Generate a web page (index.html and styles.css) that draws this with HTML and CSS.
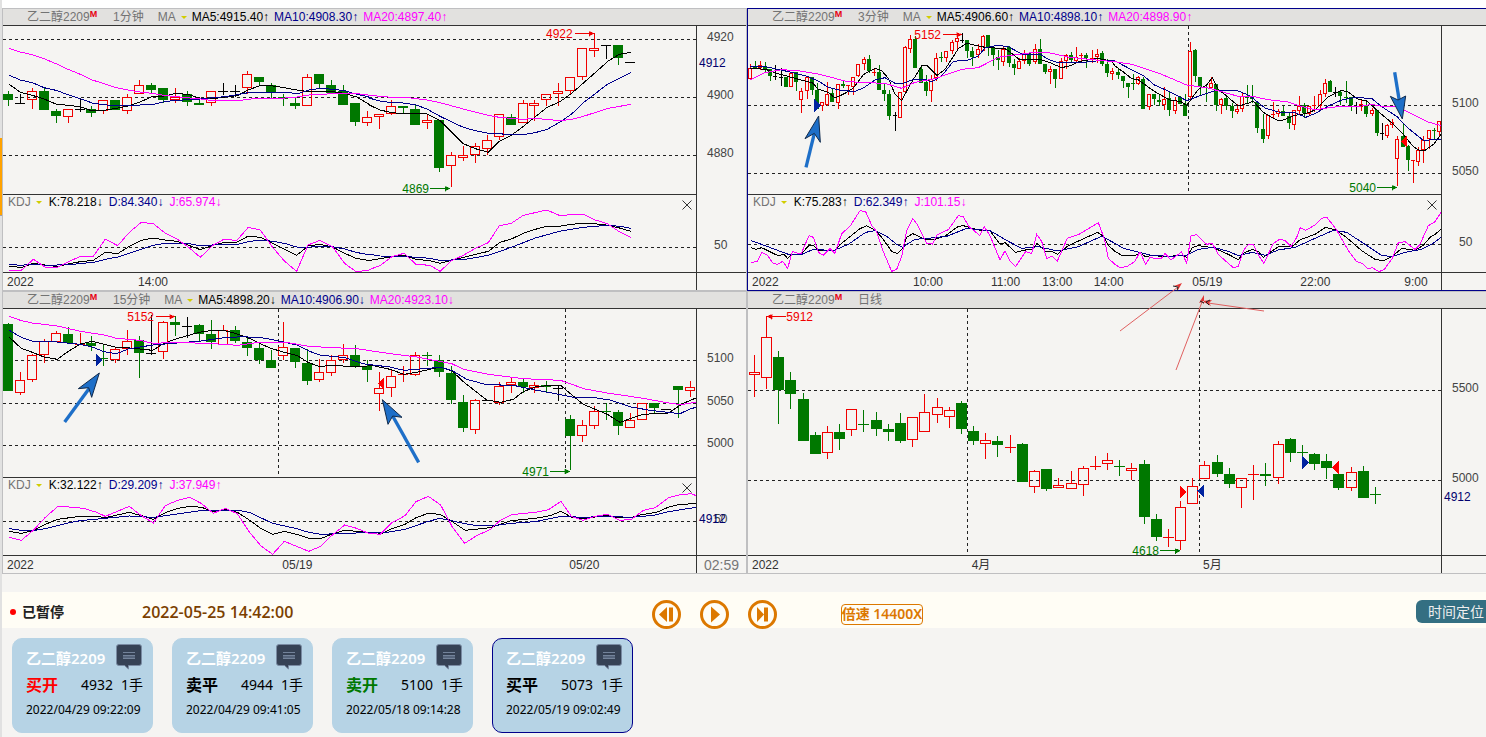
FILE: index.html
```html
<!DOCTYPE html>
<html lang="zh-CN">
<head>
<meta charset="utf-8">
<title>乙二醇2209</title>
<link rel="stylesheet" href="styles.css">
</head>
<body>
<div class="app">
  <aside class="rail"><div class="rail-mark"></div></aside>
  <div class="main">
    <main class="charts">
      <section class="panel" data-chart="m1">
        <header class="head">
          <span class="name">乙二醇2209<sup>M</sup></span><span class="period">1分钟</span>
          <button class="pick" type="button">MA<i class="caret"></i></button>
          <span class="ma5">MA5:4915.40↑</span><span class="ma10">MA10:4908.30↑</span><span class="ma20">MA20:4897.40↑</span>
        </header>
        <div class="plot">
          <svg class="price"></svg>
          <div class="sub">
            <svg class="kdj"></svg>
            <div class="legend"><button class="pick" type="button">KDJ<i class="caret"></i></button><span class="ma5">K:78.218↓</span><span class="ma10">D:84.340↓</span><span class="ma20">J:65.974↓</span></div>
            <button class="close" type="button" aria-label="关闭"><svg viewBox="0 0 10 10"><path d="M.5.5l9 9M9.5.5l-9 9"/></svg></button>
          </div>
        </div>
        <svg class="axis"></svg>
        <svg class="time"></svg>
        <div class="corner"></div>
      </section>

      <section class="panel panel-active" data-chart="m3">
        <header class="head">
          <span class="name">乙二醇2209<sup>M</sup></span><span class="period">3分钟</span>
          <button class="pick" type="button">MA<i class="caret"></i></button>
          <span class="ma5">MA5:4906.60↑</span><span class="ma10">MA10:4898.10↑</span><span class="ma20">MA20:4898.90↑</span>
        </header>
        <div class="plot">
          <svg class="price"></svg>
          <div class="sub">
            <svg class="kdj"></svg>
            <div class="legend"><button class="pick" type="button">KDJ<i class="caret"></i></button><span class="ma5">K:75.283↑</span><span class="ma10">D:62.349↑</span><span class="ma20">J:101.15↓</span></div>
            <button class="close" type="button" aria-label="关闭"><svg viewBox="0 0 10 10"><path d="M.5.5l9 9M9.5.5l-9 9"/></svg></button>
          </div>
        </div>
        <svg class="axis"></svg>
        <svg class="time"></svg>
        <div class="corner"></div>
      </section>

      <section class="panel" data-chart="m15">
        <header class="head">
          <span class="name">乙二醇2209<sup>M</sup></span><span class="period">15分钟</span>
          <button class="pick" type="button">MA<i class="caret"></i></button>
          <span class="ma5">MA5:4898.20↓</span><span class="ma10">MA10:4906.90↓</span><span class="ma20">MA20:4923.10↓</span>
        </header>
        <div class="plot">
          <svg class="price"></svg>
          <div class="sub">
            <svg class="kdj"></svg>
            <div class="legend"><button class="pick" type="button">KDJ<i class="caret"></i></button><span class="ma5">K:32.122↑</span><span class="ma10">D:29.209↑</span><span class="ma20">J:37.949↑</span></div>
            <button class="close" type="button" aria-label="关闭"><svg viewBox="0 0 10 10"><path d="M.5.5l9 9M9.5.5l-9 9"/></svg></button>
          </div>
        </div>
        <svg class="axis"></svg>
        <svg class="time"></svg>
        <div class="corner">02:59</div>
      </section>

      <section class="panel" data-chart="day">
        <header class="head">
          <span class="name">乙二醇2209<sup>M</sup></span><span class="period">日线</span>
        </header>
        <div class="plot">
          <svg class="price price-tall"></svg>
        </div>
        <svg class="axis"></svg>
        <svg class="time"></svg>
        <div class="corner"></div>
      </section>

      <svg class="notes" viewBox="0 0 150 90">
        <path d="M2 49L60 5M58 88L84 20M146 29L90 21"/>
        <path class="note-tip" d="M64 1l-8 3 4 0 0 4zM86 13l-5 8 3-1 2 2zM84 19l10-1-3 3 2 3z"/>
        <path class="note-edge" d="M55 4l5 1-1 4M92 18l-4 2 3 3M82 19l4 2"/>
      </svg>
    </main>

    <section class="bar">
      <span class="status"><i class="dot"></i>已暂停</span>
      <time class="clock">2022-05-25 14:42:00</time>
      <div class="transport">
        <button type="button" aria-label="后退"><svg viewBox="0 0 29 29"><circle cx="14.5" cy="14.5" r="13"/><path d="M7 14.5L15 7v15zM17 7.5h4v14h-4z"/></svg></button>
        <button type="button" aria-label="播放"><svg viewBox="0 0 29 29"><circle cx="14.5" cy="14.5" r="13"/><path d="M11 6.5l9 8-9 8z"/></svg></button>
        <button type="button" aria-label="前进"><svg viewBox="0 0 29 29"><circle cx="14.5" cy="14.5" r="13"/><path d="M9 7l7 7.500-7 7.500zM16 7.500h4v14h-4z"/></svg></button>
      </div>
      <button class="speed" type="button">倍速 14400X</button>
      <button class="locate" type="button">时间定位</button>
    </section>

    <section class="cards">
      <article class="card">
        <div class="card-top"><span>乙二醇2209</span><svg viewBox="0 0 26 26"><path class="bub" d="M3 .5h20a2.500 2.500 0 0 1 2.500 2.500v16a2.500 2.500 0 0 1-2.500 2.500H12.500V25L8.500 21.500H3A2.500 2.500 0 0 1 .5 19V3A2.500 2.500 0 0 1 3 .5z"/><path class="fill" d="M7 11h12v4H7z"/><path class="txt" d="M7 8.500h12M7 11.500h12M7 14.500h12"/></svg></div>
        <div class="card-mid"><b class="red">买开</b><span>4932</span><span>1手</span></div>
        <time>2022/04/29 09:22:09</time>
      </article>
      <article class="card">
        <div class="card-top"><span>乙二醇2209</span><svg viewBox="0 0 26 26"><path class="bub" d="M3 .5h20a2.500 2.500 0 0 1 2.500 2.500v16a2.500 2.500 0 0 1-2.500 2.500H12.500V25L8.500 21.500H3A2.500 2.500 0 0 1 .5 19V3A2.500 2.500 0 0 1 3 .5z"/><path class="fill" d="M7 11h12v4H7z"/><path class="txt" d="M7 8.500h12M7 11.500h12M7 14.500h12"/></svg></div>
        <div class="card-mid"><b>卖平</b><span>4944</span><span>1手</span></div>
        <time>2022/04/29 09:41:05</time>
      </article>
      <article class="card">
        <div class="card-top"><span>乙二醇2209</span><svg viewBox="0 0 26 26"><path class="bub" d="M3 .5h20a2.500 2.500 0 0 1 2.500 2.500v16a2.500 2.500 0 0 1-2.500 2.500H12.500V25L8.500 21.500H3A2.500 2.500 0 0 1 .5 19V3A2.500 2.500 0 0 1 3 .5z"/><path class="fill" d="M7 11h12v4H7z"/><path class="txt" d="M7 8.500h12M7 11.500h12M7 14.500h12"/></svg></div>
        <div class="card-mid"><b class="green">卖开</b><span>5100</span><span>1手</span></div>
        <time>2022/05/18 09:14:28</time>
      </article>
      <article class="card card-on">
        <div class="card-top"><span>乙二醇2209</span><svg viewBox="0 0 26 26"><path class="bub" d="M3 .5h20a2.500 2.500 0 0 1 2.500 2.500v16a2.500 2.500 0 0 1-2.500 2.500H12.500V25L8.500 21.500H3A2.500 2.500 0 0 1 .5 19V3A2.500 2.500 0 0 1 3 .5z"/><path class="fill" d="M7 11h12v4H7z"/><path class="txt" d="M7 8.500h12M7 11.500h12M7 14.500h12"/></svg></div>
        <div class="card-mid"><b>买平</b><span>5073</span><span>1手</span></div>
        <time>2022/05/19 09:02:49</time>
      </article>
    </section>
  </div>
</div>
<script src="charts.js"></script>
</body>
</html>
```
FILE: styles.css
```css
* { box-sizing: border-box; }
body {
  margin: 0;
  background: #f5f4f2;
  color: #000;
  font: 12px/16px "Liberation Sans", "Noto Sans CJK SC", sans-serif;
}
button { margin: 0; padding: 0; border: 0; background: none; font: inherit; color: inherit; cursor: pointer; }
svg { display: block; }
i { font-style: normal; }

.app { display: flex; min-height: 100vh; overflow: hidden; }
.rail { flex: 0 0 2px; background: #e1e1e1; padding-top: 138px; }
.rail-mark { height: 78px; background: #ffa200; border-bottom: 1px solid #a0a0a0; }
.main { flex: 1; min-width: 0; }

.charts {
  position: relative;
  display: grid;
  grid-template-columns: 745fr 739fr;
  border-top: 8px solid #fff;
}
.panel {
  display: grid;
  grid-template-columns: minmax(0, 1fr) 50px;
  border: 1px solid #bfbfc1;
}
.panel:nth-of-type(even) { grid-template-columns: minmax(0, 1fr) 45px; border-right: 0; }
.panel-active { border-color: #00008b; }

.head {
  grid-column: 1 / -1;
  display: flex;
  height: 17px;
  padding-left: 24px;
  background: #e2e1df;
  border-bottom: 1px solid #333;
  white-space: nowrap;
}
.name, .period, .pick { color: #737373; }
.name { width: 86px; }
.name sup { color: #e60012; font: bold 9px/8px "Liberation Sans", sans-serif; vertical-align: 4px; }
.period { margin-right: 14px; }
.pick { display: flex; align-items: center; gap: 5px; margin-right: 6px; line-height: 16px; }
.head .pick { margin-right: 5px; }
.caret { border: 3px solid transparent; border-top-color: #d2cd00; border-bottom: 0; }
.ma5 { color: #000; margin-right: 5px; }
.ma10 { color: #00008b; margin-right: 5px; }
.ma20 { color: #f0f; }

.plot { min-width: 0; border-bottom: 1px solid #333; }
.price, .kdj { width: 100%; overflow: visible; }
.price { height: 168px; }
.price-tall { height: 246px; }
.sub { position: relative; border-top: 1px solid #333; }
.kdj { height: 77px; }
.legend { position: absolute; top: -1px; left: 5px; display: flex; gap: 1px; }
.close { position: absolute; top: 5px; right: 4px; width: 10px; height: 10px; }
.close path { stroke: #333; fill: none; }

.axis { width: 100%; height: 247px; border-left: 1px solid #333; border-bottom: 1px solid #333; fill: #444; }
.time { width: 100%; height: 17px; fill: #333; }
.corner { border-left: 1px solid #333; padding-left: 7px; color: #777; font-size: 14px; line-height: 18px; height: 17px; }
.tag-now { fill: #00006e; }

.grid { stroke: #222; stroke-width: 3; stroke-dasharray: 9 9; }
.frame { shape-rendering: crispEdges; }
.frame path, .frame polyline { fill: none; stroke-width: 3; }
.frame .up { stroke: #f00000; }
.frame .down { stroke: #007800; fill: #007800; }
.frame .flat { stroke: #000; }
.frame .s5 { stroke: #000; }
.frame .s10 { stroke: #00008b; }
.frame .s20 { stroke: #f0f; }
.frame .solid { stroke: none; }
.frame .solid.down { fill: #007800; }
.buy { fill: #0023a0; }
.sell { fill: red; }
.hi { fill: #f00000; stroke: #f00000; }
.lo { fill: #007800; stroke: #007800; }
text.hi, text.lo { stroke: none; }
.shaft { stroke: #1e6fc8; stroke-width: 10; }
.head-tip { fill: #1e6fc8; stroke: #102a4c; stroke-width: 3; }

.notes { position: absolute; left: 75.200%; top: 274px; width: 150px; height: 90px; }
.notes path { fill: none; stroke: #e06060; }
.notes .note-tip { fill: #e23434; stroke: none; }
.notes .note-edge { stroke: #222; }

.bar {
  display: flex;
  height: 36px;
  margin-top: 18px;
  padding-left: 8px;
  background: #fffdf5;
  font: 14px/20px "Noto Sans", "Noto Sans CJK SC", sans-serif;
}
.status { display: flex; align-items: center; gap: 6px; width: 132px; height: 40px; color: #222; font-weight: 600; }
.dot { width: 6px; height: 6px; border-radius: 50%; background: red; }
.clock { flex: 0 1 510px; color: #7b3f00; font: 600 16px/40px "Open Sans", "Noto Sans", sans-serif; white-space: nowrap; }
.transport { display: flex; gap: 19px; padding-top: 8px; }
.transport svg { width: 29px; height: 29px; }
.transport circle { fill: none; stroke: #dc7800; stroke-width: 3; }
.transport path { fill: #dc7800; }
.speed {
  width: 82px;
  height: 21px;
  margin: 12px 0 0 64px;
  border: 1px solid #dc7800;
  border-radius: 4px;
  color: #dc7800;
  font-weight: 600;
  line-height: 17px;
  white-space: nowrap;
  display: flex;
  justify-content: center;
}
.locate {
  width: 70px;
  height: 23px;
  margin: 8px 0 0 auto;
  padding-left: 12px;
  border-radius: 6px 0 0 6px;
  background: #346f82;
  color: #eee;
  text-align: left;
  white-space: nowrap;
}

.cards { display: flex; flex-wrap: wrap; gap: 19px; padding: 10px; }
.card {
  width: 141px;
  padding: 5px 8px 9px 13px;
  border: 1px solid #b6d3e5;
  border-radius: 10px;
  background: #b6d3e5;
  font: 14px/20px "Noto Sans", "Noto Sans CJK SC", sans-serif;
  white-space: nowrap;
}
.card-on { border-color: #00008b; }
.card-top { display: flex; justify-content: space-between; height: 29px; color: #fff; font-weight: 600; font-size: 15px; line-height: 29px; padding-right: 2px; }
.card-top svg { width: 26px; height: 26px; }
.bub { fill: #364255; stroke: #7a8ba3; }
.fill { fill: #56657c; }
.txt { fill: none; stroke: #74849b; }
.card-mid { display: grid; grid-template-columns: 55px 40px auto; height: 24px; line-height: 24px; }
.card-mid b { font-size: 16px; }
.card time { display: block; font-size: 12px; line-height: 26px; }
.red { color: red; }
.green { color: #007800; }
```
FILE: charts.js
```js
// Plot units: three per CSS pixel. Each series is split in a left and a right half;
// the right half is stored relative to HALF.
const HALF = 1110, LEFT = 9, WIDTH = 2079;

const charts = {
  m1: {
    top: 78, height: 504, subTop: 585, start: 24.5, step: 35.92, body: [5, 10],
    grid: [118, 292, 466], subGrid: 742, breaks: [],
    candles: `g 274 283 300 317;k 283 310 310 310;r 265 274 298 326;g 264 274 332 332;g 328 334 350 368;r 328 328 350 368;k 298 327 327 333;g 319 328 341 350;r 301 301 331 341;g 301 301 332 332;r 283 292 332 341;r 240 256 280 280;g 250 256 272 277;g 265 265 300 306;r 265 292 299 308;g 274 284 308 317;g 298 309 317 317;r 274 274 307 317;k 250 274 274 283;k 255 274 274 290;r 213 223 262 280;g 231 231 248 256;g 249 256 281 291;g 283 292 298 317;g 294 310 318 326;r 222 232 316 316;g 222 222 254 265;g 240 256 279 279;g 256 274 317 317;g 309 309 368 377;r 333 352 367 377;r 343 343 349 385;r 300 319 340 343;g 319 319 326 340;g 316 328 377 377;r 344 361 367 386;g 361 361 506 515;r 457 466 496 560;r 439 466 472 482;r 430 439 464 488;r 406 421 446 464;r 343 343 409 418;g 343 352 377 377;r 301 310 367 367;r 301 310 317 360;r 283 283 298 316;r 250 274 280 317;r 232 232 271 280;r 145 145 230 239;r 100 145 151 170;k 136 136 136 176;g 136 136 176 194;k 187 187 187 187`,
    s5: ["28,253 61,277 97,286 132,297 168,312 204,316 241,320 277,333 312,331 348,325 385,318 420,306 456,290 492,288 530,280 566,284 602,295 640,296 676,291 712,287 745,270 781,256 818,258 853,263 890,270 926,275 962,275 998,275 1034,280 1070,291 1104,311", "0,316 30,330 66,338 99,341 171,342 210,362 280,431 316,446 355,457 388,424 425,405 460,379 530,323 570,305 605,280 680,214 715,183 748,163 783,157"],
    s10: ["28,226 61,240 97,248 132,263 168,271 204,284 241,296 277,309 312,314 348,318 385,316 456,314 492,305 530,301 570,299 602,297 640,293 676,290 712,284 745,278 781,276 853,276 893,281 926,270 962,265 998,268 1034,272 1070,283 1104,290", "0,295 30,303 66,308 99,309 135,314 171,327 210,349 280,382 316,392 355,400 388,401 425,405 460,404 495,398 530,389 570,366 605,342 640,308 715,251 783,217"],
    s20: ["28,145 61,156 97,164 132,176 168,191 204,208 241,223 277,240 312,251 348,263 385,270 420,276 456,280 492,286 530,290 602,297 640,302 720,301 770,295 830,296 890,291 926,285 1000,281 1070,281 1104,285", "0,286 30,289 66,292 105,292 171,300 210,308 280,327 355,346 388,352 460,358 495,355 570,362 605,358 640,349 715,325 783,313"],
    k: ["28,798 64,803 100,790 136,795 172,800 208,791 241,785 280,781 316,757 353,761 388,739 424,721 460,714 496,720 530,724 566,736 601,749 637,736 673,727 710,727 745,708 781,712 818,730 853,748 890,766 924,738 960,733 998,741 1034,760 1068,775 1104,781", "0,781 66,770 102,766 138,778 180,782 210,790 246,781 280,772 355,754 390,727 424,717 460,700 496,688 530,679 568,679 604,673 640,670 700,673 745,683 783,694"],
    d: ["28,793 64,796 100,792 136,796 208,794 280,787 316,778 353,771 388,760 424,748 460,736 496,730 566,731 601,737 637,735 712,733 745,725 781,720 818,724 853,730 890,741 924,742 960,738 998,740 1034,747 1068,757 1104,764", "0,763 30,768 100,769 180,775 210,781 280,779 355,766 424,742 496,714 568,694 640,682 712,676 750,679 783,685"],
    j: ["28,811 64,811 100,778 136,802 172,802 208,784 241,769 280,769 316,717 353,737 388,697 424,667 460,671 496,700 530,716 566,742 601,772 637,737 673,717 710,722 745,682 781,690 818,742 853,783 890,814 924,735 960,721 998,741 1034,790 1068,815 1104,811", "0,808 30,797 66,770 102,760 138,793 180,796 210,814 246,781 280,766 316,745 355,728 388,677 424,670 460,646 530,630 568,646 640,643 676,660 712,671 748,695 783,712"],
    tags: [["hi", "4922", 1638, 115, 1724, 1782, 100], ["lo", "4869", 1207, 579, 1290, 1350, 565]],
    marks: [], arrows: [],
    axis: [["4920", 123], ["4912", 201, 1], ["4900", 297], ["4880", 471], ["50", 747]],
    time: [["2022", 21], ["14:00", 414]]
  },
  m3: {
    top: 78, height: 504, subTop: 585, start: 15, step: 15.55, body: [2, 4],
    grid: [316, 520], subGrid: 733, breaks: [1330],
    candles: `r 193 205 235 235;g 183 198 208 208;r 183 195 203 208;g 187 198 208 215;g 208 208 230 240;k 195 230 230 237;k 205 233 233 255;g 231 231 261 261;r 219 219 259 259;g 216 216 248 270;r 265 274 298 338;r 231 231 271 295;g 231 231 272 283;g 250 271 329 329;r 307 307 316 332;r 248 283 314 317;g 265 281 308 308;r 253 253 308 326;g 243 252 260 262;r 256 256 260 283;r 231 231 259 283;r 193 193 227 230;r 171 178 190 208;g 165 177 215 218;r 208 218 221 227;g 195 216 270 270;g 253 270 282 300;g 270 283 350 359;k 338 346 346 390;r 277 277 352 352;r 139 142 274 277;r 105 119 146 158;g 110 118 206 206;g 202 208 249 249;g 226 247 275 287;r 226 238 270 305;r 161 176 231 240;g 157 171 174 184;r 153 153 171 185;r 121 127 152 160;r 109 116 124 150;k 101 120 120 128;g 120 120 153 173;g 141 153 171 195;r 132 147 163 172;r 105 109 150 150;g 105 105 145 165;g 143 143 165 195;g 150 172 181 207;r 138 148 185 197;g 138 142 191 200;g 178 193 206 222;r 175 184 206 206;r 151 160 180 190;g 158 160 192 195;r 132 148 184 190;g 117 148 192 192;g 192 192 216 219;r 200 208 213 249;g 207 207 237 261;r 176 184 234 234;r 163 166 181 205;g 158 166 182 188;r 141 171 181 185;r 160 165 168 187;g 159 166 174 202;r 150 174 177 186;r 147 163 170 186;g 153 160 192 195;g 178 192 221 228;r 205 215 220 238;g 205 216 227 235;g 229 229 243 263;g 250 250 261 292;g 223 250 254 267;r 229 232 249 252;g 232 237 328 328;r 283 283 320 329;g 283 283 298 313;g 287 300 308 317;r 261 298 313 328;g 277 295 332 345;r 291 301 331 340;g 289 293 313 313;g 282 314 350 350;r 126 153 290 296;g 148 150 230 243;g 231 231 261 282;g 253 261 265 305;r 231 250 262 262;g 253 253 315 332;r 295 298 313 340;g 286 295 320 328;g 310 319 333 351;r 313 327 333 339;r 276 289 325 333;g 255 290 294 306;g 255 293 297 307;g 306 306 384 396;g 342 387 419 428;r 346 346 406 415;r 308 343 346 351;r 329 334 340 350;g 319 334 350 350;g 340 350 371 384;r 331 331 373 388;r 288 318 331 340;g 311 316 341 351;r 320 320 340 346;r 288 317 320 334;r 270 283 315 330;r 237 250 280 288;g 240 243 276 276;k 261 278 278 290;g 270 278 290 314;g 243 291 294 306;g 291 293 316 330;k 307 320 320 341;r 297 314 320 332;g 308 316 342 350;r 325 331 340 346;g 331 331 399 405;k 371 400 400 419;r 373 376 406 412;r 359 368 372 383;r 409 418 475 557;g 372 410 441 441;g 437 440 482 510;r 480 480 482 546;r 442 451 484 497;r 408 421 448 488;r 390 390 415 445;g 385 390 394 418;r 364 364 393 406`,
    s5: ["15,205 62,208 94,220 110,224 140,232 186,245 202,248 220,268 250,277 270,294 300,280 325,264 355,224 390,205 410,212 430,235 450,283 470,302 495,255 530,197 545,196 576,226 600,208 640,146 665,130 720,142 780,146 800,160 822,178 850,180 886,178 910,186 950,203 980,196 1000,185 1058,175 1100,184", "0,198 24,215 50,236 69,239 87,252 118,274 148,291 166,301 196,304 215,316 250,268 274,256 292,232 310,268 336,289 370,318 398,310 415,304 445,337 475,355 492,363 505,360 540,346 570,341 601,330 640,290 680,271 700,276 725,296 755,303 800,343 832,370 865,403 895,440 915,452 930,451 957,432 978,403"],
    s10: ["15,199 62,200 94,207 140,217 186,229 220,243 250,262 290,272 330,274 355,264 390,240 420,233 450,250 470,252 500,240 540,238 560,246 590,228 625,184 670,180 700,168 720,144 755,136 790,140 830,162 886,163 910,178 940,189 1000,188 1040,185 1073,180", "0,183 40,204 87,228 118,255 148,268 181,284 215,302 258,286 300,272 370,273 398,284 415,296 450,324 490,336 540,338 572,352 601,340 640,318 680,300 720,292 771,296 800,320 846,350 880,385 925,421 978,418"],
    s20: ["15,240 60,218 110,209 160,212 220,222 300,243 340,247 420,250 470,265 510,247 570,236 620,218 652,208 700,203 760,172 800,166 860,158 915,159 970,171 1040,179", "0,185 50,193 140,223 215,255 280,264 370,289 412,289 460,299 520,306 555,318 600,329 660,321 740,318 771,313 800,319 846,320 880,336 940,366 978,377"],
    k: ["19,743 34,748 50,743 97,766 118,764 128,776 140,763 168,763 192,736 205,736 220,750 250,752 270,750 290,730 310,714 345,686 365,677 390,690 410,712 440,754 458,761 472,745 485,712 503,701 520,708 540,719 565,720 600,708 640,679 655,677 700,690 735,692 765,732 780,728 812,757 850,748 862,750 876,730 900,753 920,754 937,763 970,737 1058,697 1075,709 1090,736", "0,754 20,766 60,766 75,760 92,770 110,766 150,770 200,766 215,772 232,743 250,737 295,743 340,763 370,779 385,760 412,748 430,754 445,772 465,757 490,740 530,740 556,719 600,703 632,682 660,689 694,712 740,752 780,778 805,782 832,769 860,745 900,751 925,736 945,712 960,703 978,688"],
    d: ["19,722 60,737 130,763 168,764 205,748 265,752 310,733 362,697 390,692 425,709 455,733 472,742 510,718 550,715 605,709 665,685 735,692 790,724 830,745 880,740 937,753 1000,740 1070,709", "0,730 25,745 60,754 110,766 165,769 215,766 250,748 295,742 340,754 370,767 412,757 450,766 490,750 540,742 600,715 655,691 695,697 750,733 800,766 830,770 870,757 920,748 950,733 978,712"],
    j: ["19,788 37,784 50,757 67,765 82,788 97,793 113,784 128,805 142,755 168,762 192,707 205,712 220,757 235,766 255,745 270,760 290,701 315,679 345,632 362,635 380,676 395,695 415,755 440,814 455,808 470,770 485,692 503,655 515,671 545,730 562,732 577,704 610,689 640,647 655,650 672,680 704,706 718,681 735,707 765,780 780,752 795,783 812,799 842,755 860,761 875,703 890,724 905,776 920,768 937,783 967,715 1000,704 1060,668 1078,716 1090,775", "0,793 15,803 35,800 60,784 75,755 92,793 105,772 120,775 140,774 150,760 168,780 200,756 215,790 228,708 245,704 275,733 292,730 310,764 355,803 370,799 385,752 400,733 415,734 430,765 447,790 475,730 495,717 510,722 528,740 545,712 556,683 572,691 600,675 620,655 635,651 665,690 700,752 725,785 742,790 760,807 772,803 792,815 808,808 832,775 850,728 870,725 900,748 915,733 940,677 960,665 978,637"],
    tags: [["hi", "5152", 508, 117, 594, 650, 103], ["lo", "5040", 1813, 576, 1896, 1956, 562]],
    marks: [["buy", "208,297 208,336 227,317"], ["sell", "1968,424 1986,406 1986,442"]],
    arrows: [["183,502 208,400", "221,348 226,427 208,400 180,416"], ["1949,217 1965,315", "1972,357 1936,289 1959,300 1982,288"]],
    axis: [["5100", 321], ["5050", 525], ["50", 739]],
    time: [["2022", 21], ["10:00", 504], ["11:00", 738], ["13:00", 892], ["14:00", 1046], ["05/19", 1342], ["22:00", 1666], ["9:00", 1978]]
  },
  m15: {
    top: 72, height: 504, subTop: 579, start: 24.5, step: 35.92, body: [5, 10],
    grid: [226, 355, 481], subGrid: 709, breaks: [836, 1696],
    candles: `g 115 118 318 318;r 262 286 322 327;r 207 211 283 290;r 163 170 208 233;r 138 146 170 170;g 127 147 176 176;r 144 177 180 180;g 153 174 184 197;g 178 219 222 242;r 186 193 224 233;r 135 169 190 209;g 153 166 204 276;k 90 205 205 208;r 108 112 199 221;g 93 111 122 152;k 96 124 124 157;g 117 120 149 166;g 105 148 173 191;r 120 135 178 178;g 124 135 170 173;g 160 171 191 212;g 177 190 225 236;g 195 225 249 249;r 111 187 211 222;g 190 190 233 248;g 192 234 290 297;r 222 262 284 290;r 210 227 262 272;r 177 211 223 233;g 182 210 244 248;g 227 244 257 290;r 262 310 325 377;r 255 274 307 335;r 243 268 271 290;r 201 211 268 272;g 203 211 215 240;g 210 227 263 275;g 243 264 347 354;g 331 351 431 440;r 342 346 433 446;k 346 346 346 346;r 291 304 353 358;r 279 292 298 323;g 282 291 308 322;r 293 301 307 323;g 288 301 308 322;k 302 309 309 347;g 390 402 455 553;r 405 421 451 470;r 363 379 421 431;g 355 379 382 402;g 375 381 425 449;r 385 406 427 427;r 355 355 403 403;g 355 355 371 383;k 373 373 373 373;g 304 304 317 398;r 289 307 316 335`,
    s5: ["28,157 64,190 97,202 132,216 172,223 205,199 241,177 277,169 350,187 390,189 458,196 490,176 530,161 602,141 638,136 674,137 712,147 748,160 782,177 816,191 853,202 890,211 926,233 960,245 1000,240 1040,244 1104,243", "0,240 60,253 102,268 140,262 210,246 245,257 280,290 350,345 392,352 430,343 460,320 496,306 530,302 572,301 600,325 640,358 712,388 750,412 784,400 820,388 895,384 940,355 978,339"],
    s10: ["28,136 64,157 100,169 172,171 240,178 277,186 312,200 350,206 385,192 458,180 530,174 602,168 674,158 730,155 790,159 853,171 890,180 926,198 960,210 1034,218 1100,239", "0,239 60,246 102,256 210,247 245,256 290,283 350,299 430,301 496,315 572,329 610,337 680,339 720,345 784,366 840,376 930,386 960,372 978,367"],
    s20: ["28,94 61,106 97,114 172,123 241,139 312,150 350,160 420,166 460,175 530,172 640,176 712,181 770,173 860,172 926,184 1000,188 1070,191", "0,197 70,207 140,216 245,236 282,253 355,268 460,281 572,286 645,312 712,324 820,340 890,353 930,359 978,352"],
    k: ["28,739 64,745 100,737 136,718 172,703 241,694 290,694 316,698 388,682 424,692 460,703 496,683 530,671 570,664 605,667 640,680 674,673 712,682 745,703 782,730 818,748 853,739 890,748 926,760 962,761 998,746 1034,736 1070,739", "0,742 36,745 66,731 105,718 138,698 175,685 210,688 245,709 286,736 360,728 424,707 496,700 540,692 573,679 605,697 640,701 712,691 750,699 784,697 815,689 860,682 896,666 930,658 978,656"],
    d: ["28,731 64,736 100,737 136,731 208,713 241,707 388,693 460,697 530,687 602,677 720,677 750,683 818,715 890,731 926,742 962,748 1034,745 1104,743", "0,743 50,742 105,733 175,709 210,700 286,716 316,721 380,721 424,715 496,710 573,694 640,697 712,694 784,697 850,691 896,680 978,667"],
    j: ["28,757 64,766 100,736 136,697 175,663 250,670 290,682 316,694 388,664 424,692 460,714 496,662 530,647 570,637 605,656 640,685 676,670 712,686 745,737 782,782 818,808 853,769 890,784 926,799 962,784 998,749 1034,720 1070,730 1104,744", "0,745 30,748 66,713 105,692 138,650 175,634 212,660 246,724 284,775 320,752 360,734 390,707 424,689 496,682 536,674 573,649 605,695 640,706 676,694 712,688 750,706 784,703 820,676 856,668 896,638 930,629 965,626 978,632"],
    tags: [["hi", "5152", 382, 108, 467, 524, 94], ["lo", "4971", 1567, 573, 1651, 1709, 558]],
    marks: [["buy", "289,207 289,245 307,226"], ["sell", "1135,295 1153,277 1153,314"]],
    arrows: [["194,411 268,310", "298,264 235,311 266,308 275,337"], ["1256,532 1178,393", "1147,344 1164,418 1178,393 1206,397"]],
    axis: [["5100", 231], ["5050", 360], ["5000", 486], ["50", 714], ["4912", 714, 1]],
    time: [["2022", 21], ["05/19", 847], ["05/20", 1708]]
  },
  day: {
    top: 72, height: 738, start: 28, step: 36.54, body: [5, 11],
    grid: [316, 586], breaks: [667, 1363],
    candles: `r 210 262 269 335;r 94 157 278 311;g 198 216 315 414;g 261 285 327 369;g 324 342 468 468;g 441 450 507 507;r 423 442 503 521;g 417 441 462 492;r 373 373 434 450;g 375 417 420 438;g 381 405 432 450;g 417 432 441 465;g 384 414 468 471;r 397 397 464 483;r 327 382 440 440;r 339 367 389 411;r 366 376 395 426;g 348 354 432 444;g 423 438 468 477;r 444 466 476 519;g 453 468 480 513;r 450 487 491 501;g 474 477 591 591;r 555 559 605 621;g 552 552 612 615;r 579 601 608 608;r 558 595 611 611;r 543 550 599 630;r 513 543 548 552;r 504 526 536 552;g 525 543 548 570;r 534 550 556 582;g 525 537 696 714;g 687 702 756 765;r 732 757 760 783;r 648 667 767 792;r 579 604 656 656;r 528 541 580 580;g 510 531 567 573;g 549 567 597 606;r 580 580 608 666;r 540 567 570 642;g 534 567 575 600;r 468 478 578 594;g 459 462 504 528;g 480 501 506 520;g 504 507 537 552;g 507 528 549 579;g 543 567 609 612;r 546 562 608 615;g 543 558 639 639;g 606 627 632 654`,
    tags: [["hi", "5912", 124, 108, 123, 66, 94], ["lo", "4618", 1162, 809, 1245, 1306, 797]],
    marks: [["sell", "1305,603 1305,640 1325,622"], ["buy", "1357,617 1377,598 1377,636"], ["buy", "1672,514 1672,552 1692,532"], ["sell", "1761,547 1781,528 1781,566"]],
    arrows: [],
    axis: [["5500", 321], ["5000", 591], ["4912", 648, 1]],
    time: [["2022", 21], ["4月", 680], ["5月", 1374]]
  }
};

const px = v => Math.floor(v / 3) * 3;
const pct = x => ((x - LEFT) / WIDTH * 100).toFixed(3) + "%";

function line(cls, halves) {
  const right = halves[1].split(" ").map(p => {
    const [x, y] = p.split(",").map(Number);
    return (x + HALF) + "," + y;
  });
  return `<polyline class="${cls}" points="${halves[0]} ${right.join(" ")}"/>`;
}

function candle(c, i, row) {
  const [kind, ...v] = row.split(" ");
  const [high, top, bottom, low] = v.map(n => px(Number(n)));
  const cx = px(c.start + c.step * i), mid = cx + 1.5;
  const x0 = cx - c.body[0] * 3, w = c.body[1] * 3;
  const cls = { r: "up", g: "down", k: "flat" }[kind];
  let d = "";
  if (high < top) d += `M${mid} ${high}V${top}`;
  if (low > bottom) d += `M${mid} ${bottom}V${low + 3}`;
  let out = "";
  if (bottom - top < 4) {
    d += `M${x0} ${top + 1.5}h${w}`;
  } else if (kind === "g") {
    out = `<path class="down solid" d="M${x0} ${top}h${w}V${bottom}h${-w}z"/>`;
  } else {
    d += `M${x0 + 1.5} ${top + 1.5}h${w - 3}V${bottom + 1.5}h${3 - w}z`;
  }
  return out + `<path class="${cls}" d="${d}"/>`;
}

function hline(y) {
  return `<path class="grid" d="M${LEFT} ${px(y) + 1.5}H${LEFT + WIDTH}"/>`;
}

function frame(y, h, inner) {
  return `<svg class="frame" width="100%" height="100%" viewBox="${LEFT} ${y} ${WIDTH} ${h}" preserveAspectRatio="none">${inner}</svg>`;
}

document.querySelectorAll(".panel").forEach(panel => {
  const c = charts[panel.dataset.chart];
  let s = c.grid.map(hline).join("");
  s += c.breaks.map(x => `<path class="grid" d="M${px(x) + 1.5} ${c.top}V${c.top + c.height}"/>`).join("");
  s += c.candles.split(";").map((row, i) => candle(c, i, row)).join("");
  ["s5", "s10", "s20"].forEach(k => { if (c[k]) s += line(k, c[k]); });
  c.tags.forEach(([cls, , , , from, to, y]) => {
    const back = to < from ? 15 : -15;
    s += `<path class="${cls}" d="M${from} ${px(y) + 1.5}H${to}"/>`;
    s += `<polygon class="${cls}" points="${to},${px(y) + 1.5} ${to + back},${y - 6} ${to + back},${y + 9}"/>`;
  });
  c.marks.forEach(([cls, pts]) => { s += `<polygon class="${cls}" points="${pts}"/>`; });
  let art = "";
  c.arrows.forEach(([shaft, tip]) => {
    art += `<polyline class="shaft" points="${shaft}"/><polygon class="head-tip" points="${tip}"/>`;
  });
  let html = frame(c.top, c.height, s);
  if (art) html += frame(c.top, c.height, art).replace('class="frame" ', "");
  html += c.tags.map(([cls, t, x, y]) => `<text class="${cls}" x="${pct(x)}" y="${Math.round((y - c.top) / 3)}">${t}</text>`).join("");
  panel.querySelector(".price").innerHTML = html;

  const sub = panel.querySelector(".kdj");
  if (sub) sub.innerHTML = frame(c.subTop, 231, hline(c.subGrid) + line("s5", c.k) + line("s10", c.d) + line("s20", c.j));

  panel.querySelector(".axis").innerHTML = c.axis.map(([t, y, now]) =>
    `<text class="${now ? "tag-now" : ""}" x="${now ? 2 : t.length < 3 ? 17 : 10}" y="${Math.round((y - c.top) / 3)}">${t}</text>`).join("");
  panel.querySelector(".time").innerHTML = c.time.map(([t, x]) => `<text x="${pct(x)}" y="13">${t}</text>`).join("");
});
```
